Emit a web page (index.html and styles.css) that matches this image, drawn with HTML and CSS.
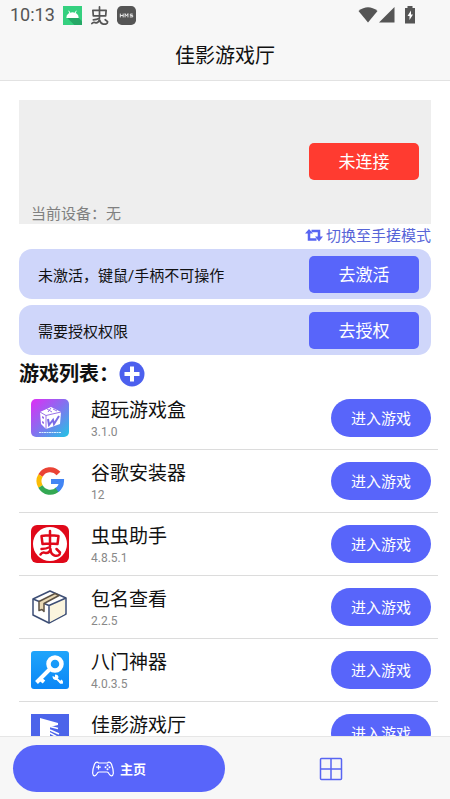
FILE: index.html
```html
<!DOCTYPE html>
<html lang="zh-CN">
<head>
<meta charset="utf-8">
<meta name="viewport" content="width=device-width, initial-scale=1">
<title>佳影游戏厅</title>
<link rel="stylesheet" href="styles.css">
</head>
<body>
<header class="top">
  <div class="status">
    <span class="clock">10:13</span>
    <svg class="s-icon" viewBox="0 0 20 20"><path fill="#35d07f" d="M0 0h20v20H0z"/><path fill="#25a866" d="M15 11l5 5v4h-8l-8-8z"/><path fill="#fff" d="M3.500 12.500a6.500 6 0 0 1 13 0z"/><path stroke="#fff" d="M6 5l1.500 3M14 5l-1.500 3"/></svg>
    <svg class="s-icon" viewBox="0 0 20 20" fill="none" stroke="#555" stroke-width="1.800" stroke-linecap="round" stroke-linejoin="round"><path d="M3 4.500h14l-.5 6h-13zM10 1v12q-3 1.500-6.500 1.500M2 18.500q1.500-2 3.500-1 3 1 4.500-3 1 4 4 4.500 4.500.5 4.500-2.500l-2.500-2"/></svg>
    <svg class="s-icon" viewBox="0 0 20 20"><rect width="20" height="20" rx="5" fill="#555"/><path fill="none" stroke="#eee" d="M3.500 8v4M6.500 8v4M3.500 10h3M8.500 12V8l1.500 2.500L11.500 8v4M16.500 8.500h-2.500V10h2.500v1.500h-3"/></svg>
    <span class="signals">
      <svg width="20" height="16" viewBox="0 0 20 16"><path fill="#555" d="M.5 4Q10-3.500 19.500 4L10 15.500z"/></svg>
      <svg width="16" height="16" viewBox="0 0 16 16"><path fill="#555" d="M15.500 0v15.500H0z"/></svg>
      <svg class="battery" width="12" height="18" viewBox="0 0 12 18"><path fill="#555" d="M3.500 0h5v2H11v15.500H1V2h2.500z"/><path fill="#fff" d="M7 4.500L3.500 10h2v4L9 8.500H7z"/></svg>
    </span>
  </div>
  <h1 class="title">佳影游戏厅</h1>
</header>

<main class="content">
  <section class="device">
    <button class="btn danger">未连接</button>
    <p class="device-name">当前设备：无</p>
  </section>
  <a class="switch" href="#mode">
    <svg width="18" height="14" viewBox="0 0 18 14" fill="none" stroke="#5865f2" stroke-width="2.500"><path d="M4 4v7.500h7.500M6.500 3h7.500v7"/><path fill="#5865f2" stroke="none" d="M4 1l4 4.500H0zM14 13.500l4-5h-8z"/></svg>
    切换至手搓模式
  </a>
  <section class="notice"><span>未激活，键鼠/手柄不可操作</span><button class="btn">去激活</button></section>
  <section class="notice"><span>需要授权权限</span><button class="btn">去授权</button></section>

  <div class="list-head">
    <h2>游戏列表：</h2>
    <button class="add" aria-label="添加游戏"><svg width="26" height="26" viewBox="0 0 26 26"><circle cx="13" cy="13" r="12.500" fill="#4c60ee"/><path stroke="#fff" stroke-width="4" d="M13 5.500v15M5.500 13h15"/></svg></button>
  </div>

  <ul class="games">
    <li class="game">
      <svg class="g-icon" viewBox="0 0 38 38"><defs><linearGradient id="box" x1="0" y1="0" x2="1" y2="1"><stop offset="0" stop-color="#e02cf5"/><stop offset=".5" stop-color="#8372ef"/><stop offset="1" stop-color="#1fc6e4"/></linearGradient></defs><rect width="38" height="38" rx="5" fill="url(#box)"/><path fill="#fff" d="M9 13l11-5 10 5-1 12-14 5-5-5z"/><path fill="none" stroke="#9a72e8" d="M9 13l6 3.500L30 13M15 16.500V30M16 10l5 3M20 9l-3 4M22 10l4 2"/><path fill="none" stroke="#7a6be6" stroke-width="2" d="M17 20l1 6 4-5 1 4 5-8"/><path fill="#9a72e8" d="M11 17l2 1v2l-2-1zM11 22l2 1v2l-2-1z"/><path stroke="#d8f0ff" stroke-dasharray="2 .5" d="M8 33.500h22"/></svg>
      <div class="info"><h3>超玩游戏盒</h3><p>3.1.0</p></div>
      <button class="enter">进入游戏</button>
    </li>
    <li class="game">
      <svg class="g-icon" viewBox="0 0 38 38" fill="none" stroke-width="5"><path stroke="#ea4335" d="M9.500 13.500A11 11 0 0 1 27.500 11.500"/><path stroke="#fbbc05" d="M9.500 24.500a11 11 0 0 1 0-11"/><path stroke="#34a853" d="M27 27a11 11 0 0 1-17.500-2.500"/><path stroke="#4285f4" d="M20 19.500h10.500A11 11 0 0 1 26 28"/></svg>
      <div class="info"><h3>谷歌安装器</h3><p>12</p></div>
      <button class="enter">进入游戏</button>
    </li>
    <li class="game">
      <svg class="g-icon" viewBox="0 0 38 38"><rect width="38" height="38" rx="6" fill="#e0091a"/><circle cx="19" cy="19" r="17" fill="#fff"/><path fill="none" stroke="#e0091a" stroke-width="2.500" stroke-linecap="round" stroke-linejoin="round" d="M10.500 11q8.500-1.500 17 0l-1 8q-7.500-1-15 0zM19 6v16q-4 2-8.500 2M9.500 29.500q2-3 5-1.500 4 .5 5-4 0 5 4 6.500 5.500 1 5.500-3l-3.500-3.500"/></svg>
      <div class="info"><h3>虫虫助手</h3><p>4.8.5.1</p></div>
      <button class="enter">进入游戏</button>
    </li>
    <li class="game">
      <svg class="g-icon" viewBox="0 0 38 38" stroke-linejoin="round"><path fill="#fff" stroke="#3d4e75" stroke-width="1.500" d="M2 11L19 3l16 7v16l-17 9L2 27z"/><path fill="#fbf5de" d="M19 17l15-6v15l-15 8z"/><path fill="none" stroke="#3d4e75" stroke-width="1.500" d="M2 11l16 6.500L35 10M18 17.500V35"/><path fill="#e9d9b5" stroke="#5d5346" stroke-width="1.500" d="M8 13.500L24 5.500l4 2-15 8v8l-2-2-3 1z"/></svg>
      <div class="info"><h3>包名查看</h3><p>2.2.5</p></div>
      <button class="enter">进入游戏</button>
    </li>
    <li class="game">
      <svg class="g-icon" viewBox="0 0 38 38"><defs><linearGradient id="key" x1="0" y1="0" x2="0" y2="1"><stop offset="0" stop-color="#1fa5fb"/><stop offset="1" stop-color="#0b86f6"/></linearGradient></defs><rect width="38" height="38" rx="3" fill="url(#key)"/><circle cx="24" cy="13" r="6.500" fill="none" stroke="#fff" stroke-width="4.500"/><path fill="none" stroke="#fff" stroke-width="4" d="M19 18L5.500 31.500M8 27l5 4"/><path fill="none" stroke="#fff" stroke-width="2" stroke-linecap="round" d="M25.500 27.500l4 4"/><path fill="#fff" d="M21.500 25l2.500 1v-2.500q3.500 0 3.500 3L25 29q-3.500 0-3.500-4zM28 31l2.500-2.500q2 1 1.500 4-3 1-4-1.500z"/></svg>
      <div class="info"><h3>八门神器</h3><p>4.0.3.5</p></div>
      <button class="enter">进入游戏</button>
    </li>
    <li class="game">
      <svg class="g-icon" viewBox="0 0 38 38"><path fill="#4c64ea" d="M0 0h38v38H0z"/><path fill="#fff" d="M9 4l18 5v2l-8 2v24H9z"/><path fill="none" stroke="#fff" stroke-width="1.500" d="M19 12.500l8 2M19 16l9 4M19 19l9 5"/></svg>
      <div class="info"><h3>佳影游戏厅</h3><p>&nbsp;</p></div>
      <button class="enter">进入游戏</button>
    </li>
  </ul>
</main>

<nav class="tabs">
  <a class="tab active" href="#home">
    <svg width="22" height="16" viewBox="0 0 22 16" fill="none" stroke="#fff" stroke-width="1.200" stroke-linejoin="round"><path d="M5 1.200q-1.500 0-2.500 2Q.5 8.500.7 12.500 1 15 2.800 14.800q1 0 2-1.800 1-2 2.200-2h8q1.200 0 2.200 2 1 1.800 2 1.800 1.800.2 2.100-2.300.2-4-1.800-9.300-1-2-2.500-2-1 0-1.500.8h-9Q6 1.200 5 1.200z"/><path d="M6.500 4v4.500M4.200 6.200h4.600"/><g fill="#fff" stroke="none"><circle cx="15.500" cy="4.200" r="1"/><circle cx="15.500" cy="8.200" r="1"/><circle cx="13.500" cy="6.200" r="1"/><circle cx="17.500" cy="6.200" r="1"/></g></svg>
    主页
  </a>
  <a class="tab" href="#more" aria-label="更多">
    <svg width="24" height="24" viewBox="0 0 24 24" fill="none" stroke="#5865f2" stroke-width="1.500"><rect x="1.500" y="1.500" width="21" height="21" rx="1"/><path d="M12 1.500v21M1.500 12h21"/></svg>
  </a>
</nav>
</body>
</html>
```
FILE: styles.css
```css
* {
  box-sizing: border-box;
  margin: 0;
  padding: 0;
}

body {
  display: flex;
  flex-direction: column;
  height: 100vh;
  overflow: hidden;
  background: #fff;
  color: #111;
  font-family: Roboto, "Noto Sans CJK SC", sans-serif;
}

svg {
  display: block;
  flex: none;
}

button {
  border: 0;
  font-family: inherit;
  color: #fff;
  cursor: pointer;
}

a {
  text-decoration: none;
}

.top {
  flex: none;
  background: #f7f7f7;
  border-bottom: 1px solid #e2e2e2;
}

.status {
  display: flex;
  align-items: center;
  gap: 8px;
  height: 30px;
  padding: 0 34px 0 10px;
}

.clock {
  font-size: 18px;
  line-height: 30px;
  color: #555;
}

.s-icon {
  width: 19px;
  height: 19px;
}

.signals {
  display: flex;
  align-items: center;
  gap: 1px;
  margin-left: auto;
}

.battery {
  margin-left: 8px;
}

.title {
  height: 50px;
  font-size: 20px;
  font-weight: 400;
  line-height: 52px;
  text-align: center;
}

.content {
  flex: 1;
  min-height: 0;
  overflow: hidden;
  padding: 19px 12px 0 19px;
}

.device,
.notice {
  margin-right: 7px;
}

.device {
  display: flex;
  flex-direction: column;
  padding: 43px 12px 0;
  background: #eee;
}

.device-name {
  padding-top: 24px;
  font-size: 15px;
  line-height: 20px;
  color: #808080;
}

.btn {
  width: 110px;
  height: 37px;
  padding-bottom: 2px;
  border-radius: 5px;
  background: #5865fa;
  font-size: 17px;
}

.danger {
  align-self: flex-end;
  background: #ff3b30;
}

.switch {
  display: flex;
  align-items: center;
  justify-content: flex-end;
  gap: 3px;
  height: 21px;
  margin: 0 7px 4px 0;
  font-size: 15px;
  color: #5865d8;
}

.notice {
  display: flex;
  align-items: center;
  justify-content: space-between;
  height: 50px;
  margin-bottom: 6px;
  padding: 0 12px 0 19px;
  border-radius: 13px;
  background: #cfd6fa;
  font-size: 15px;
}

.list-head {
  display: flex;
  align-items: center;
  height: 26px;
}

.list-head h2 {
  font-size: 20px;
  line-height: 28px;
}

.add {
  background: none;
}

.games {
  list-style: none;
}

.game {
  display: flex;
  align-items: center;
  height: 63px;
  padding: 0 7px 0 12px;
  border-bottom: 1px solid #dcdcdc;
}

.g-icon {
  width: 38px;
  height: 38px;
}

.info {
  flex: 1;
  padding: 3px 0 0 22px;
}

.info h3 {
  font-size: 19px;
  font-weight: 400;
  line-height: 24px;
}

.info p {
  font-size: 12px;
  line-height: 18px;
  color: #888;
}

.enter {
  width: 100px;
  height: 38px;
  padding-bottom: 2px;
  border-radius: 19px;
  background: #5865fa;
  font-size: 15px;
}

.tabs {
  display: flex;
  flex: none;
  padding: 8px 13px 7px;
  border-top: 1px solid #e6e6e6;
  background: #f7f7f7;
}

.tab {
  display: flex;
  flex: 1;
  align-items: center;
  justify-content: center;
  gap: 6px;
  height: 47px;
  border-radius: 24px;
  font-size: 13px;
  font-weight: 700;
  color: #fff;
}

.active {
  background: #5865fa;
}
```
